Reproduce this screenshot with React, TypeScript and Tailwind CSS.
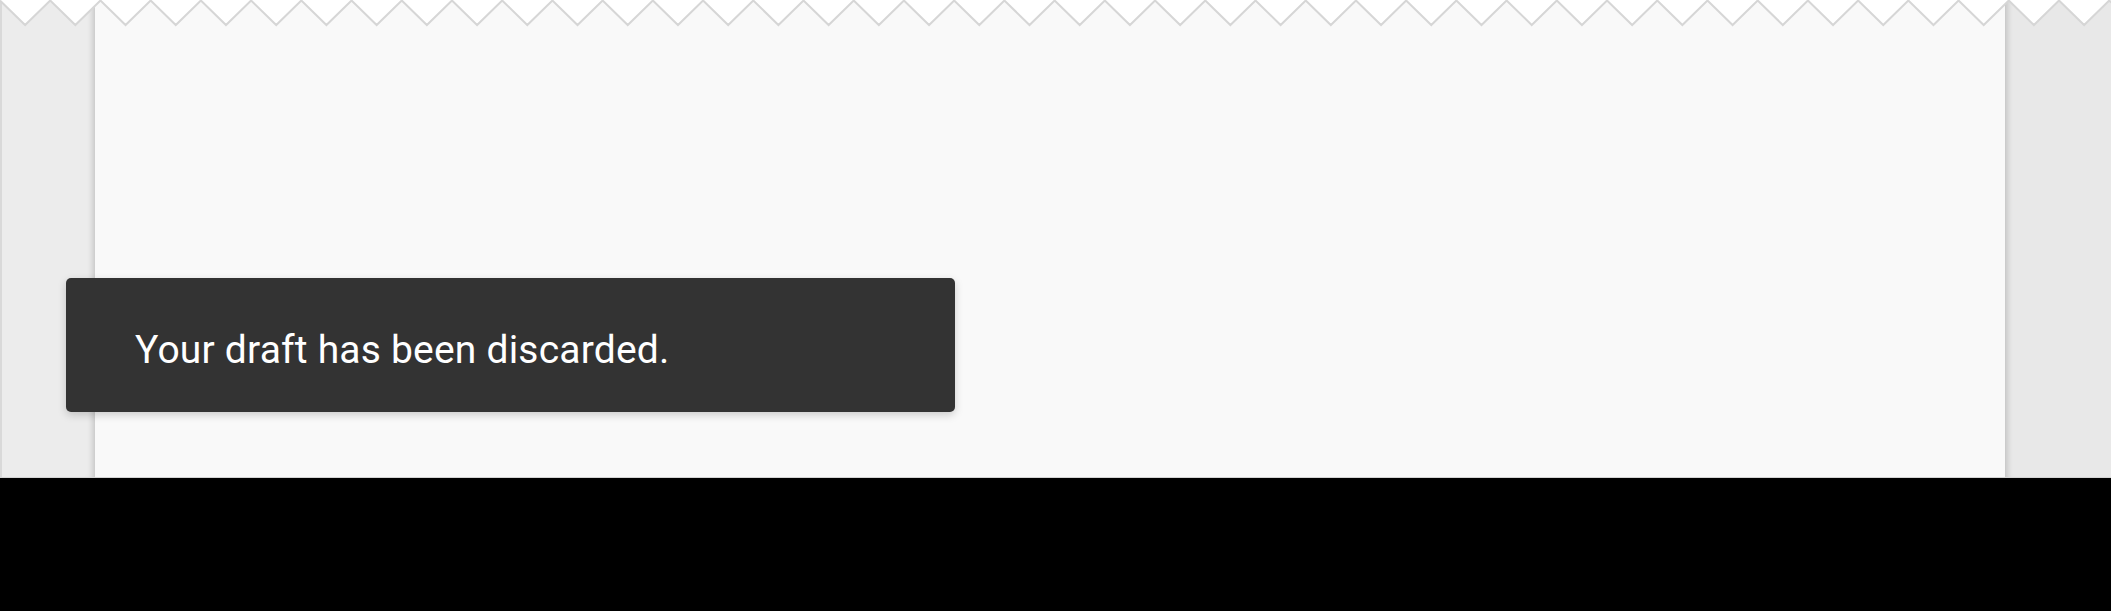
import React from "react";

const P = 50.22;
const W = 2111;

function Zigzag() {
  const pts: string[] = [];
  for (let i = 0; i * P <= W + P; i++) {
    pts.push(`${(i * P).toFixed(2)},0.5`);
    pts.push(`${(i * P + P / 2).toFixed(2)},25`);
  }
  const line = pts.join(" ");
  const fill = `0,-2 ${line} ${W + P},-2`;
  return (
    <svg
      className="absolute left-0 top-0"
      width={W}
      height={30}
      viewBox={`0 0 ${W} 30`}
    >
      <polygon points={fill} fill="#ffffff" />
      <polyline points={line} fill="none" stroke="#d6d6d6" strokeWidth={2} />
    </svg>
  );
}

export default function App() {
  return (
    <div className="flex h-[611px] w-[2111px] flex-col bg-black overflow-hidden">
      <div className="relative flex h-[478px] border-b border-[#d4d4d4]">
        <div className="w-[95px] border-l-2 border-[#d9d9d9] bg-[#ececec] shadow-[inset_-7px_0_6px_-5px_rgba(0,0,0,0.18)]" />
        <div className="flex-1 bg-[#f9f9f9]" />
        <div className="w-[106px] bg-[#e8e8e8] shadow-[inset_7px_0_6px_-5px_rgba(0,0,0,0.18)]" />
        <Zigzag />
        <div className="absolute left-[66px] top-[278px] flex h-[134px] w-[889px] items-center rounded-[5px] bg-[#333333] pl-[69px] pt-[10px] shadow-[0_3px_8px_rgba(0,0,0,0.18)]">
          <span
            className="text-[39px] leading-none tracking-[0.2px] text-white"
            style={{ fontFamily: "Roboto, 'Noto Sans', sans-serif" }}
          >
            Your draft has been discarded.
          </span>
        </div>
      </div>
    </div>
  );
}
